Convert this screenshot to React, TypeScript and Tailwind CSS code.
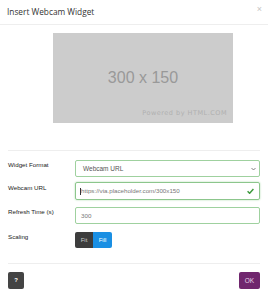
import React from "react";

export default function App() {
  return (
    <div className="w-[268px] h-[300px] bg-white flex flex-col font-['Liberation_Sans',Arial,sans-serif] overflow-hidden">
      <div className="h-[25px] shrink-0 border-b border-[#eeeeee] pl-[7px] pr-[6px] flex items-center justify-between">
        <span className="font-['Open_Sans',sans-serif] text-[8.3px] text-[#333333] leading-none">Insert Webcam Widget</span>
        <span className="text-[9px] leading-none text-[#c4c4c4] -mt-[5px]">×</span>
      </div>

      <div className="pt-[8px] pl-[53px]">
        <div className="w-[180px] h-[90px] bg-[#cccccc] flex flex-col">
          <div className="flex-1 flex items-center justify-center pt-[14px] text-[16px] text-[#999999] font-['Liberation_Sans',Arial,sans-serif]">
            300 x 150
          </div>
          <div className="h-[14px] pr-[6px] flex justify-end items-start text-[6.5px] tracking-[0.5px] text-[#b0b0b0] font-['DejaVu_Sans',sans-serif]">
            Powered by HTML.COM
          </div>
        </div>
      </div>

      <div className="mt-[27px] mx-[8px] border-t border-[#eeeeee]" />

      <div className="px-[8px] pt-[9px] flex flex-col">
        <div className="flex items-start">
          <div className="w-[67px] pt-[1px] text-[6.2px] leading-[7px] text-[#222222] font-normal">Widget Format</div>
          <div className="flex-1 h-[17px] border border-[#9fd19f] rounded-[2px] flex items-center pl-[7px] pr-[3px] text-[6.5px] text-[#555555]">
            <span className="flex-1">Webcam URL</span>
            <svg width="5" height="4" viewBox="0 0 10 7">
              <path d="M1 1.5 L5 5.5 L9 1.5" stroke="#666" strokeWidth="1.6" fill="none" />
            </svg>
          </div>
        </div>

        <div className="flex items-start mt-[5px]">
          <div className="w-[67px] pt-[2px] text-[6.2px] leading-[7px] text-[#222222] font-normal">Webcam URL</div>
          <div className="flex-1 h-[18px] border border-[#8cc68c] rounded-[2px] shadow-[0_0_2px_#a8d8a8] flex items-center pl-[4px] pr-[5px] text-[6.2px] text-[#777777]">
            <span className="w-[0.5px] h-[7px] bg-[#333] mr-[0.5px]" />
            <span className="flex-1">https://via.placeholder.com/300x150</span>
            <svg width="7" height="6" viewBox="0 0 12 10">
              <path d="M1 5.5 L4.5 9 L11 1.5" stroke="#3c9a3c" strokeWidth="2.4" fill="none" />
            </svg>
          </div>
        </div>

        <div className="flex items-start mt-[7px]">
          <div className="w-[67px] pt-[1px] text-[6.2px] leading-[7px] text-[#222222] font-normal">Refresh Time (s)</div>
          <div className="flex-1 h-[17px] border border-[#9fd19f] rounded-[2px] flex items-center pl-[5px] text-[6.2px] text-[#777777]">
            300
          </div>
        </div>

        <div className="flex items-start mt-[8px]">
          <div className="w-[67px] pt-[1px] text-[6.2px] leading-[7px] text-[#222222] font-normal">Scaling</div>
          <div className="flex h-[16px] rounded-[2px] overflow-hidden text-[6px]">
            <div className="w-[18px] bg-[#3d3d3d] text-[#cccccc] flex items-center justify-center">Fit</div>
            <div className="w-[19px] bg-[#1a8fe3] text-white flex items-center justify-center">Fill</div>
          </div>
        </div>
      </div>

      <div className="mt-[15px] mx-[8px] border-t border-[#eeeeee]" />

      <div className="px-[8px] pt-[8px] flex justify-between items-start">
        <div className="w-[16px] h-[17px] bg-[#444444] rounded-[2px] flex items-center justify-center text-[6px] font-bold text-white">?</div>
        <div className="w-[21px] h-[17px] bg-[#70266e] rounded-[2px] flex items-center justify-center text-[6.5px] text-[#e6d4e6]">OK</div>
      </div>
    </div>
  );
}
